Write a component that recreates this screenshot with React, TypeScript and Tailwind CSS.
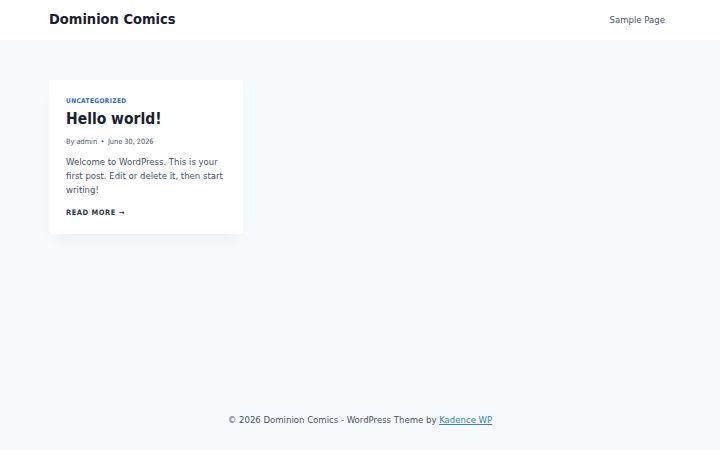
export default function App() {
  return (
    <div className="w-[720px] h-[450px] bg-[#f7fafc] flex flex-col" style={{ fontFamily: '"DejaVu Sans Condensed", "DejaVu Sans", sans-serif', fontStretch: 'semi-condensed' }}>
      <header className="h-[40px] bg-white flex items-center justify-between pl-[49px] pr-[55px] shrink-0">
        <div className="text-[14.5px] font-bold text-[#1a202c]">Dominion Comics</div>
        <div className="text-[9.5px] text-[#4a5568]">Sample Page</div>
      </header>
      <main className="flex-1 pt-[40px] pl-[49px]">
        <article className="w-[194px] bg-white rounded-[2px] shadow-[0_8px_16px_-6px_rgba(0,0,0,0.06)] px-[17px] pt-[17px] pb-[16px]">
          <div className="text-[6.5px] font-bold tracking-[0.06em] text-[#2b6cb0] uppercase leading-[8px]">Uncategorized</div>
          <h2 className="mt-[4px] text-[15.5px] font-bold text-[#1a202c] leading-[20px]">Hello world!</h2>
          <div className="mt-[8px] text-[7.3px] text-[#4a5568] leading-[10px] flex items-center">
            <span>By admin</span>
            <span className="mx-[3.5px]">•</span>
            <span>June 30, 2026</span>
          </div>
          <p className="mt-[8px] text-[9.5px] text-[#4a5568] leading-[14px]">
            Welcome to WordPress. This is your first post. Edit or delete it, then start writing!
          </p>
          <div className="mt-[11px] text-[7.5px] font-bold tracking-[0.07em] text-[#2d3748] leading-[10px] uppercase">Read More →</div>
        </article>
      </main>
      <footer className="h-[62px] flex items-start justify-center pt-[25px] shrink-0">
        <div className="text-[9.5px] text-[#4a5568]">
          © 2026 Dominion Comics - WordPress Theme by <span className="underline text-[#3182ce]">Kadence WP</span>
        </div>
      </footer>
    </div>
  );
}
